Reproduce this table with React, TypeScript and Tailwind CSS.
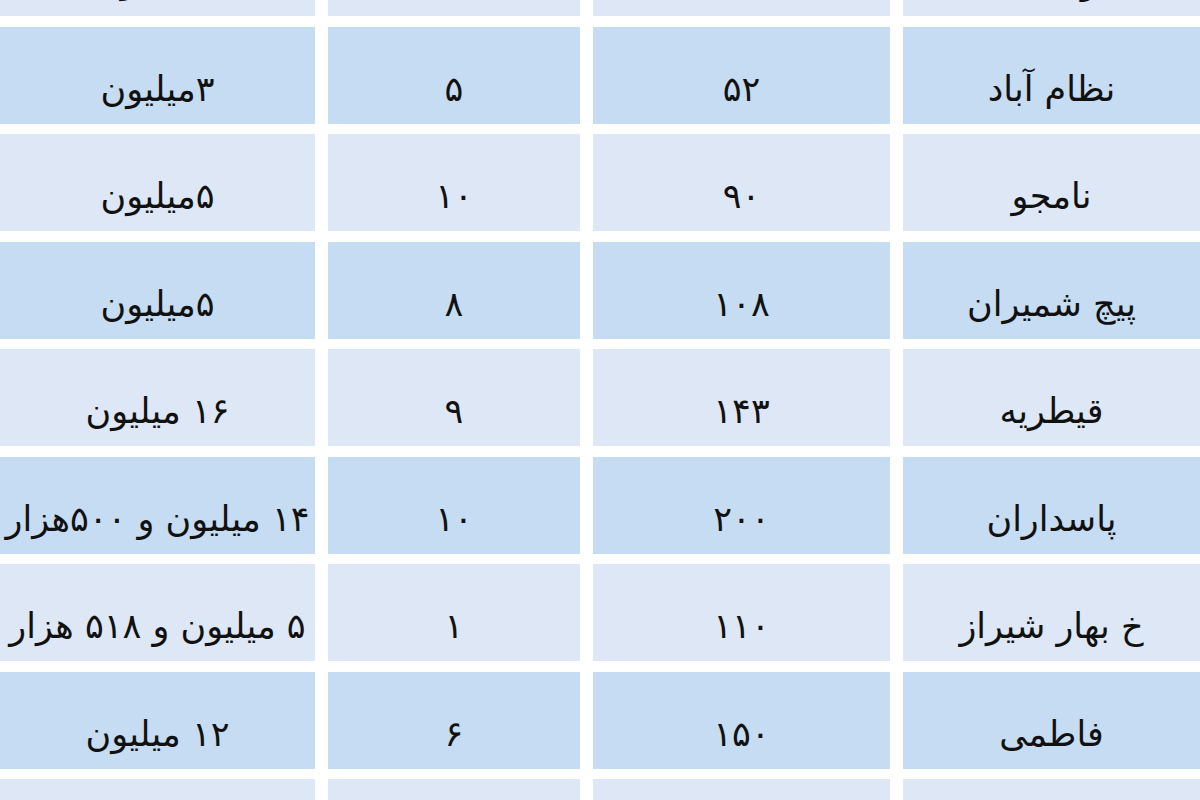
type Row = {
  name: string;
  area: string;
  count: string;
  price: string;
};

const rows: Row[] = [
  { name: "ولنجک", area: "", count: "", price: "۶ میلیون" },
  { name: "نظام آباد", area: "۵۲", count: "۵", price: "۳میلیون" },
  { name: "نامجو", area: "۹۰", count: "۱۰", price: "۵میلیون" },
  { name: "پیچ شمیران", area: "۱۰۸", count: "۸", price: "۵میلیون" },
  { name: "قیطریه", area: "۱۴۳", count: "۹", price: "۱۶ میلیون" },
  { name: "پاسداران", area: "۲۰۰", count: "۱۰", price: "۱۴ میلیون و ۵۰۰هزار" },
  { name: "خ بهار شیراز", area: "۱۱۰", count: "۱", price: "۵ میلیون و ۵۱۸ هزار" },
  { name: "فاطمی", area: "۱۵۰", count: "۶", price: "۱۲ میلیون" },
  { name: "", area: "", count: "", price: "" },
];

function Cell({ children, dark }: { children: string; dark: boolean }) {
  return (
    <div
      className={`h-[97px] flex items-center justify-center pt-[28px] text-center whitespace-nowrap ${
        dark ? "bg-[#c6dcf2]" : "bg-[#dde7f6]"
      }`}
    >
      {children}
    </div>
  );
}

export default function App() {
  return (
    <div className="w-[1200px] h-[800px] overflow-hidden bg-white">
      <div
        dir="rtl"
        className="-mt-[81px] grid grid-cols-[297px_297px_252px_315px] gap-x-[13px] gap-y-[10.5px] text-[35px] leading-none text-[#111111] font-['DejaVu_Sans',sans-serif]"
      >
        {rows.map((r, i) => {
          const dark = i % 2 === 1;
          return [
            <Cell key={`${i}-n`} dark={dark}>{r.name}</Cell>,
            <Cell key={`${i}-a`} dark={dark}>{r.area}</Cell>,
            <Cell key={`${i}-c`} dark={dark}>{r.count}</Cell>,
            <Cell key={`${i}-p`} dark={dark}>{r.price}</Cell>,
          ];
        })}
      </div>
    </div>
  );
}
